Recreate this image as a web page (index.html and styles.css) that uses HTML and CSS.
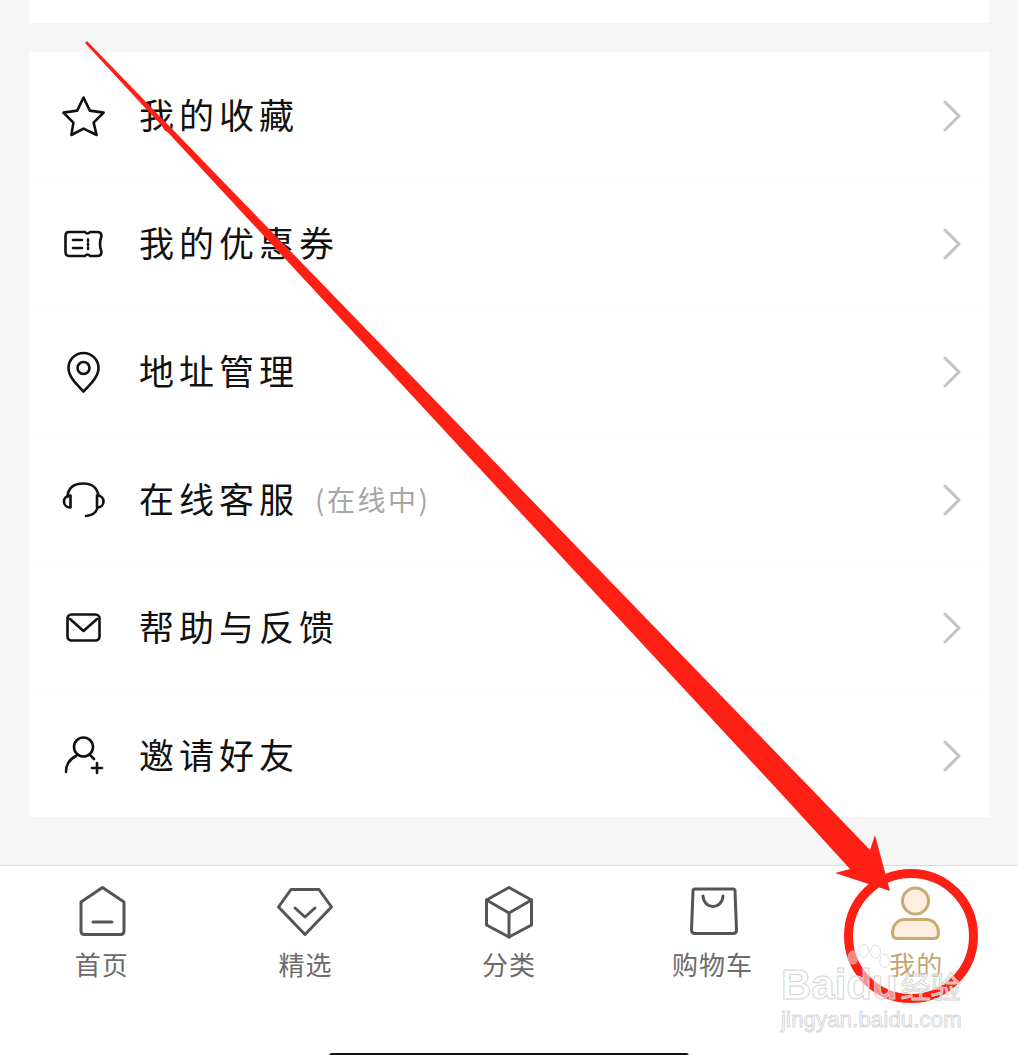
FILE: index.html
```html
<!DOCTYPE html>
<html lang="zh-CN">
<head>
  <meta charset="UTF-8" />
  <title>我的</title>
  <link rel="stylesheet" href="styles.css">
</head>
<body>

  <div class="page">
    <!-- top card, mostly scrolled away -->
    <div class="card-top"></div>

    <!-- menu list -->
    <ul class="menu">
      <li class="menu-row">
        <svg class="menu-icon" viewBox="0 0 48 48"><path d="M23.5 5.5 L29.8 18.6 L43.6 20.6 L33.6 30.6 L36.6 43 L23.5 36.6 L11.4 43 L13.4 30.6 L3.4 20.6 L17.2 18.6 Z"/></svg>
        <span class="menu-text">我的收藏</span>
        <svg class="chevron" viewBox="0 0 20 32"><path d="M3 2 L17 16 L3 30"/></svg>
      </li>
      <li class="menu-row">
        <svg class="menu-icon" viewBox="0 0 48 48"><path d="M9 12 H25 Q27.5 15 30 12 H37 Q41.5 12 41.5 16 Q38.5 24 41.5 32 Q41.5 36 37 36 H30 Q27.5 33 25 36 H9 Q5.5 36 5.5 32 V16 Q5.5 12 9 12 Z"/><path d="M13 20 H22 M13 28 H22 M28 19.5 V21 M28 23.5 V25 M28 27.5 V29"/></svg>
        <span class="menu-text">我的优惠券</span>
        <svg class="chevron" viewBox="0 0 20 32"><path d="M3 2 L17 16 L3 30"/></svg>
      </li>
      <li class="menu-row">
        <svg class="menu-icon" viewBox="0 0 48 48"><path d="M23.5 43.5 C15 35 8.5 28 8.5 20 A15 15 0 0 1 38.5 20 C38.5 28 32 35 23.5 43.5 Z"/><circle cx="23.5" cy="20" r="6"/></svg>
        <span class="menu-text">地址管理</span>
        <svg class="chevron" viewBox="0 0 20 32"><path d="M3 2 L17 16 L3 30"/></svg>
      </li>
      <li class="menu-row">
        <svg class="menu-icon" viewBox="0 0 48 48"><path d="M7.5 21 C8 12 14 7.5 23.5 7.5 C32 7.5 37.5 12 38.5 20"/><path d="M10.5 19.5 C6.5 19.5 4 22 4 25.5 C4 29 6.5 31.5 10.5 31.5 Z"/><path d="M37 19.5 C41 19.5 43.5 22 43.5 25.5 C43.5 29 41 31.5 37 31.5 Z"/><path d="M37.5 32 C36 37 32 39.5 26 40"/></svg>
        <span class="menu-text">在线客服</span>
        <span class="menu-note">(在线中)</span>
        <svg class="chevron" viewBox="0 0 20 32"><path d="M3 2 L17 16 L3 30"/></svg>
      </li>
      <li class="menu-row">
        <svg class="menu-icon" viewBox="0 0 48 48"><rect x="7.5" y="10.5" width="32" height="26" rx="4"/><path d="M10 15 L23.5 27 L37 15"/></svg>
        <span class="menu-text">帮助与反馈</span>
        <svg class="chevron" viewBox="0 0 20 32"><path d="M3 2 L17 16 L3 30"/></svg>
      </li>
      <li class="menu-row">
        <svg class="menu-icon" viewBox="0 0 48 48"><circle cx="23.5" cy="15" r="9.5"/><path d="M6 40 C6 32 10 27 16 24 M31 24 L34 27"/><path d="M32 36 H42 M37 31 V41"/></svg>
        <span class="menu-text">邀请好友</span>
        <svg class="chevron" viewBox="0 0 20 32"><path d="M3 2 L17 16 L3 30"/></svg>
      </li>
    </ul>

    <!-- tab bar -->
    <footer class="tabbar">
      <nav class="tabs">
        <div class="tab">
          <svg class="tab-icon" viewBox="0 0 56 56"><path d="M28.5 3.5 L50 18 V47 Q50 50.5 46.5 50.5 H10.5 Q7 50.5 7 47 V18 Z"/><path d="M19 38 H38"/></svg>
          <span class="tab-label">首页</span>
        </div>
        <div class="tab">
          <svg class="tab-icon" viewBox="0 0 56 56"><path d="M14 5.5 H42 L54.5 23 L28 50.5 L1.5 23 Z"/><path d="M18 24 L28 33 L38 24"/></svg>
          <span class="tab-label">精选</span>
        </div>
        <div class="tab">
          <svg class="tab-icon" viewBox="0 0 56 56"><path d="M28 3.5 L50.5 16 V41 L28 53 L5.5 41 V16 Z"/><path d="M5.5 16 L28 29 L50.5 16 M28 29 V53"/></svg>
          <span class="tab-label">分类</span>
        </div>
        <div class="tab">
          <svg class="tab-icon" viewBox="0 0 56 56"><path d="M10 5 H48 Q50 5 50 7 L51.5 46 Q51.5 49.5 48 49.5 H10 Q6.5 49.5 6.5 46 L8 7 Q8 5 10 5 Z"/><path d="M18 12 C19 26 37 26 38 12"/></svg>
          <span class="tab-label">购物车</span>
        </div>
        <div class="tab active">
          <svg class="tab-icon" viewBox="0 0 56 56"><circle cx="27.5" cy="17" r="13"/><path d="M17 35.5 H38 C45 35.5 50.5 41 50.5 49 Q50.5 54.5 46 54.5 H9 Q4.5 54.5 4.5 49 C4.5 41 10 35.5 17 35.5 Z"/></svg>
          <span class="tab-label">我的</span>
        </div>
      </nav>
      <div class="home-bar"></div>
    </footer>
  </div>

  <!-- red annotation drawn over the screenshot -->
  <svg class="annotation" viewBox="0 0 1018 1055">
    <polygon points="87,41 822,800 870,850 875,835 890,891 835,873 850,869 787,800 85,43"/>
    <circle cx="911" cy="936" r="62.5"/>
  </svg>

  <!-- baidu jingyan watermark -->
  <div class="watermark">
    <svg class="paw" viewBox="0 0 60 50">
      <ellipse cx="12" cy="16" rx="6" ry="8"/>
      <ellipse cx="25" cy="8" rx="6" ry="8"/>
      <ellipse cx="39" cy="9" rx="6" ry="8"/>
      <ellipse cx="50" cy="20" rx="6" ry="8"/>
    </svg>
    <div class="wm-brand"><span class="wm-bai">Baidu</span><span class="wm-jy">经验</span></div>
    <div class="wm-url">jingyan.baidu.com</div>
  </div>

</body>
</html>
```

FILE: styles.css
```css
/* Reset & Base */
* {
  box-sizing: border-box;
  margin: 0;
  padding: 0;
}

html, body {
  height: 100%;
  overflow: hidden;
}

body {
  position: relative;
  font-family: "Noto Sans CJK SC", "Noto Sans", sans-serif;
  background-color: #f6f6f6;
  color: #111;
}

.page {
  display: flex;
  flex-direction: column;
  height: 1055px;
}

/* Cards */
.card-top {
  flex: none;
  height: 23px;
  margin: 0 29px 29px;
  background-color: #fff;
}

.menu {
  flex: none;
  list-style: none;
  height: 765px;
  margin: 0 29px;
  background-color: #fff;
}

.menu-row {
  display: flex;
  align-items: center;
  height: 128px;
  padding: 0 27px 0 31px;
  border-bottom: 1px solid #fcfcfc;
}

.menu-row:last-child {
  border-bottom: none;
}

.menu-icon {
  flex: none;
  width: 48px;
  height: 48px;
  margin-right: 31px;
  fill: none;
  stroke: #111;
  stroke-width: 2.6;
  stroke-linejoin: round;
  stroke-linecap: round;
}

.menu-text {
  margin-bottom: 4px;
  font-size: 35px;
  line-height: 48px;
  letter-spacing: 5px;
  color: #111;
}

.menu-note {
  margin-left: 16px;
  margin-bottom: 2px;
  font-size: 28px;
  letter-spacing: 2.5px;
  color: #a6a6a6;
}

.chevron {
  flex: none;
  width: 20px;
  height: 32px;
  margin-left: auto;
  fill: none;
  stroke: #c2c2c2;
  stroke-width: 3;
  stroke-linecap: round;
  stroke-linejoin: round;
}

/* Tab bar */
.tabbar {
  flex: none;
  height: 190px;
  margin-top: 48px;
  padding-top: 18px;
  background-color: #fff;
  border-top: 1px solid #dcdcdc;
}

.tabs {
  display: grid;
  grid-template-columns: repeat(5, 1fr);
}

.tab {
  display: flex;
  flex-direction: column;
  align-items: center;
}

.tab-icon {
  width: 56px;
  height: 56px;
  fill: none;
  stroke: #555;
  stroke-width: 3;
  stroke-linejoin: round;
  stroke-linecap: round;
}

.tab-label {
  font-size: 26px;
  line-height: 48px;
  letter-spacing: 1px;
  color: #6b6b6b;
}

.tab.active .tab-icon {
  fill: #fdeee0;
  stroke: #c8aa72;
}

.tab.active .tab-label {
  color: #c3a670;
}

.home-bar {
  width: 360px;
  height: 6px;
  margin: 65px auto 0;
  background-color: #111;
  border-radius: 3px 3px 0 0;
}

/* Annotation */
.annotation {
  position: absolute;
  left: 0;
  top: 0;
  width: 1018px;
  height: 1055px;
}

.annotation polygon {
  fill: #ff2015;
}

.annotation circle {
  fill: none;
  stroke: #ff2015;
  stroke-width: 9;
}

/* Watermark */
.watermark {
  position: absolute;
  left: 781px;
  top: 962px;
  width: 190px;
  font-family: "Liberation Sans", sans-serif;
}

.paw {
  position: absolute;
  left: 62px;
  top: -18px;
  width: 50px;
  height: 42px;
  fill: rgba(255, 255, 255, 0.45);
  stroke: rgba(205, 205, 205, 0.8);
  stroke-width: 1;
}

.wm-brand {
  display: flex;
  align-items: center;
  height: 46px;
}

.wm-bai {
  font-size: 42px;
  font-weight: bold;
  line-height: 46px;
  color: rgba(255, 255, 255, 0.5);
  -webkit-text-stroke: 1px #d4d4d4;
}

.wm-jy {
  margin-left: 3px;
  font-family: "Noto Sans CJK SC", sans-serif;
  font-size: 30px;
  line-height: 46px;
  color: rgba(255, 255, 255, 0.5);
  -webkit-text-stroke: 1px #d4d4d4;
}

.wm-url {
  font-size: 22px;
  line-height: 24px;
  letter-spacing: 0.2px;
  color: rgba(255, 255, 255, 0.5);
  -webkit-text-stroke: 1px #d8d8d8;
}
```
